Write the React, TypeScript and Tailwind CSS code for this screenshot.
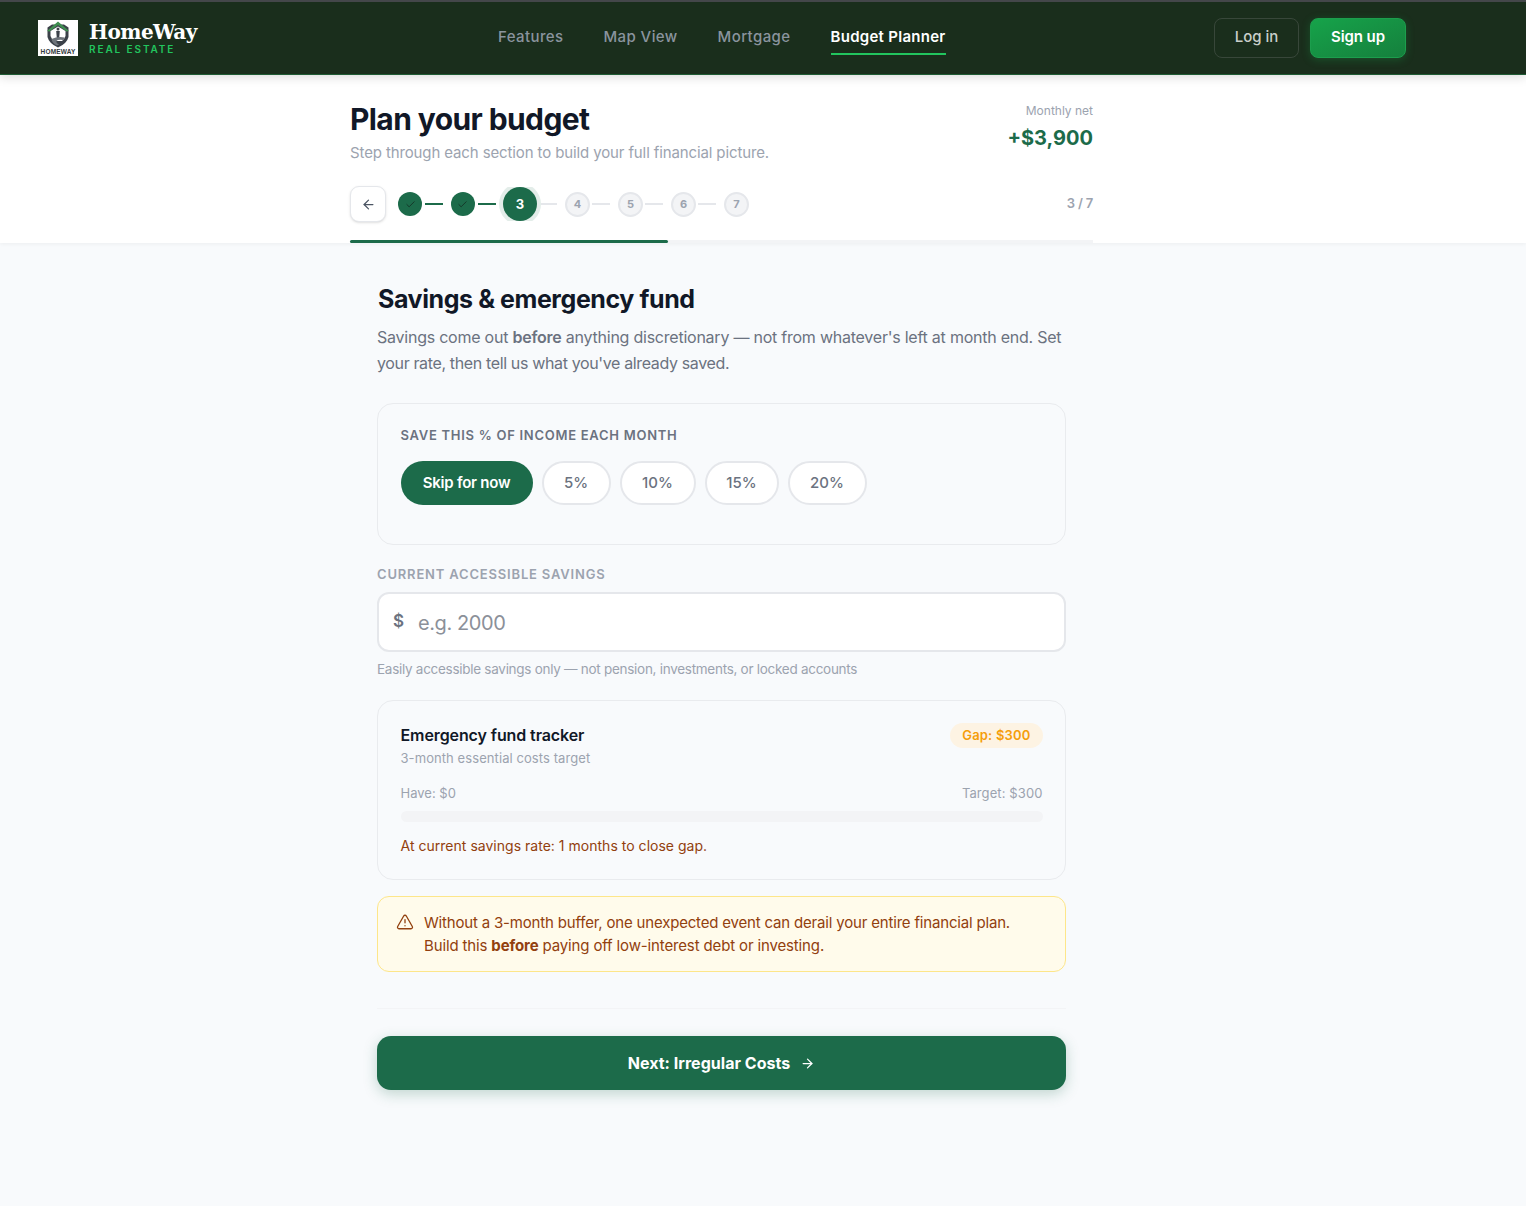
import React from "react";
import { ArrowLeft, ArrowRight, Check, TriangleAlert } from "lucide-react";

function Logo() {
  return (
    <div className="flex h-9 w-10 flex-col items-center bg-white">
      <svg viewBox="0 0 40 28" className="h-7 w-10">
        <path d="M9.5 7.5 L14 4.5 L26 4.5 L30.5 7.5 L30.5 17 Q29 23.5 20 27.5 Q11 23.5 9.5 17 Z" fill="#3b4149" />
        <path d="M12.5 11 L20 6.5 L27.5 11 L27.5 16 Q26 20 24 21 L16 21 Q14 20 12.5 16 Z" fill="#ffffff" />
        <path d="M9 11 L20 1.5 L31 11 L28.5 11.5 L20 5 L11.5 11.5 Z" fill="#3f8f50" />
        <circle cx="20" cy="9" r="1.5" fill="#3b4149" />
        <path d="M18.2 11 h3.6 l-.6 7 h-2.4 Z" fill="#3b4149" />
        <path d="M13.5 19 Q20 16 26.5 17.5 L25.5 20 Q20 19 18.5 21 Q18 23 21 24.5 L19 25.5 Q14 23 13.5 19 Z" fill="#6d737a" />
      </svg>
      <span className="font-['Liberation_Sans'] text-[6.5px] leading-[8px] font-bold tracking-[0.15px] text-[#333a40]">HOMEWAY</span>
    </div>
  );
}

function DoneStep() {
  return (
    <div className="flex items-center">
      <div className="flex h-6 w-6 items-center justify-center rounded-full bg-[#1c6b4a] text-[#143326]">
        <Check size={11} strokeWidth={2} />
      </div>
      <div className="ml-[3px] mr-[7.5px] h-[2px] w-[18px] bg-[#1c6b4a]" />
    </div>
  );
}

function TodoStep({ n, last }: { n: number; last?: boolean }) {
  return (
    <div className="flex items-center">
      <div className="flex h-[25px] w-[25px] items-center justify-center rounded-full border-2 border-[#e5e7eb] bg-[#f3f4f6] text-[11px] font-bold text-[#9ca3af]">
        {n}
      </div>
      {!last && <div className="ml-[2px] mr-2 h-[2px] w-[18px] bg-[#e5e7eb]" />}
    </div>
  );
}

function Pill({ children, width }: { children: React.ReactNode; width: string }) {
  return (
    <button className={`flex h-11 items-center justify-center rounded-full border-2 border-[#e5e7eb] bg-white pt-px text-[15px] font-medium text-[#6b7280] ${width}`}>
      {children}
    </button>
  );
}

export default function App() {
  return (
    <div className="min-h-[1206px] bg-[#f8fafc] font-['Inter',sans-serif]">
      <header className="relative z-10 flex h-[75px] items-center border-t-2 border-b border-t-[#44474a] border-b-[#1f5c34] bg-[#1a2e1c] pl-[38px] pr-[120px] shadow-[0_2px_10px_rgba(0,0,0,0.15)]">
        <div className="flex w-[160px] items-center gap-[11px]">
          <Logo />
          <div>
            <div className="font-['DejaVu_Serif',serif] text-[20px] leading-[22px] font-bold tracking-[-0.5px] text-white">HomeWay</div>
            <div className="text-[10px] leading-[12px] font-semibold tracking-[1.9px] text-[#22c55e]">REAL ESTATE</div>
          </div>
        </div>
        <nav className="mt-[5px] ml-[300px] flex items-center gap-10 text-[15px] leading-5 font-medium tracking-[0.4px] text-[#8a949e]">
          <a className="border-b-2 border-transparent pt-px pb-[6px]">Features</a>
          <a className="border-b-2 border-transparent pt-px pb-[6px]">Map View</a>
          <a className="border-b-2 border-transparent pt-px pb-[6px]">Mortgage</a>
          <a className="border-b-2 border-[#22c55e] pt-px pb-[6px] font-semibold tracking-[0.28px] text-white">Budget Planner</a>
        </nav>
        <div className="ml-auto flex items-center gap-[11px]">
          <button className="h-10 w-[85px] rounded-lg border border-[#38473a] pb-px text-[15px] font-medium text-[#c9cfca]">Log in</button>
          <button className="h-10 w-[96px] rounded-lg border border-[#1c9e4d] bg-gradient-to-br from-[#16a34a] to-[#15803d] pb-px text-[15px] font-semibold tracking-[-0.1px] text-white shadow-[0_2px_8px_rgba(22,163,74,0.3)]">Sign up</button>
        </div>
      </header>

      <section className="h-[168px] bg-white shadow-[0_1px_4px_rgba(0,0,0,0.05)]">
        <div className="ml-[350px] flex h-full w-[743px] flex-col">
          <div className="flex justify-between pt-[25px]">
            <div>
              <h1 className="text-[30px] leading-[38px] font-bold tracking-[-0.6px] text-[#111827]">Plan your budget</h1>
              <p className="mt-[4px] text-[15px] leading-[22px] tracking-[-0.12px] text-[#9ca3af]">Step through each section to build your full financial picture.</p>
            </div>
            <div className="pt-[2px] text-right">
              <div className="text-[12px] leading-[18px] text-[#9ca3af]">Monthly net</div>
              <div className="mt-[3px] text-[20px] leading-[30px] font-bold text-[#1c6b4a]">+$3,900</div>
            </div>
          </div>
          <div className="mt-[22px] flex items-center">
            <button className="mr-3 flex h-9 w-9 items-center justify-center rounded-[9px] border border-[#e5e7eb] bg-white text-[#4b5563] shadow-sm">
              <ArrowLeft size={15} />
            </button>
            <DoneStep />
            <DoneStep />
            <div className="flex items-center">
              <div className="h-[34px] overflow-y-clip">
                <div className="flex h-[34px] w-[34px] items-center justify-center rounded-full bg-[#1c6b4a] pt-px text-[13px] font-bold text-white shadow-[0_0_0_4px_rgba(28,107,74,0.12)]">3</div>
              </div>
              <div className="ml-1 mr-2 h-[2px] w-4 bg-[#e5e7eb]" />
            </div>
            <TodoStep n={4} />
            <TodoStep n={5} />
            <TodoStep n={6} />
            <TodoStep n={7} last />
            <span className="ml-auto text-[13px] font-semibold tracking-[-0.2px] text-[#9ca3af]">3 / 7</span>
          </div>
          <div className="mt-auto h-[3px] bg-[#f3f4f6]">
            <div className="h-full w-[318px] rounded-full bg-[#1c6b4a]" />
          </div>
        </div>
      </section>

      <main className="ml-[377px] w-[689px] pt-[40px]">
        <h2 className="pl-px text-[25px] leading-[32px] font-bold tracking-[-0.42px] text-[#111827]">Savings &amp; emergency fund</h2>
        <p className="mt-[9px] text-[16px] leading-[26px] text-[#6b7280]">
          <span className="tracking-[-0.235px]">Savings come out <b className="font-semibold">before</b> anything discretionary — not from whatever's left at month end. Set</span>
          <br />
          <span className="tracking-[-0.36px]">your rate, then tell us what you've already saved.</span>
        </p>

        <div className="mt-[27px] h-[142px] rounded-2xl border-[1.5px] border-[#e9ebee] px-[22.5px] pt-[20.5px]">
          <div className="text-[13px] leading-[20px] font-semibold tracking-[0.72px] text-[#6b7280]">SAVE THIS % OF INCOME EACH MONTH</div>
          <div className="mt-[16px] flex gap-[9px]">
            <button className="flex h-11 w-[132px] items-center justify-center rounded-full bg-[#1c6b4a] pt-[2px] text-[15px] font-semibold tracking-[-0.22px] text-white">Skip for now</button>
            <Pill width="w-[69px]">5%</Pill>
            <Pill width="w-[76px]">10%</Pill>
            <Pill width="w-[74px]">15%</Pill>
            <Pill width="w-[79px]">20%</Pill>
          </div>
        </div>

        <label className="mt-[19px] block text-[13px] leading-[20px] font-semibold tracking-[0.82px] text-[#9ca3af]">CURRENT ACCESSIBLE SAVINGS</label>
        <div className="mt-2 flex h-[60px] items-center rounded-xl border-2 border-[#e5e7eb] bg-white pl-[14px]">
          <span className="w-[25px] text-[17px] font-semibold text-[#6b7280]">$</span>
          <span className="pt-[2px] text-[20px] tracking-[-0.4px] text-[#8b9099]">e.g. 2000</span>
        </div>
        <p className="mt-[7px] text-[13.5px] leading-[20px] tracking-[-0.28px] text-[#9ca3af]">Easily accessible savings only — not pension, investments, or locked accounts</p>

        <div className="mt-[21px] h-[180px] rounded-2xl border-[1.5px] border-[#e9ebee] px-[22.5px] pt-[21.5px]">
          <div className="flex items-start justify-between">
            <div>
              <div className="text-[16px] leading-[24px] font-semibold tracking-[-0.1px] text-[#111827]">Emergency fund tracker</div>
              <div className="text-[13px] leading-[22px] tracking-[0.08px] text-[#9ca3af]">3-month essential costs target</div>
            </div>
            <div className="flex h-[25px] items-center rounded-full bg-[#fdf3e3] px-3 pt-[2px] text-[13px] font-semibold tracking-[0.18px] text-[#f59e0b]">Gap: $300</div>
          </div>
          <div className="mt-[14px] flex justify-between text-[13px] leading-[20px] text-[#9ca3af]">
            <span>Have: $0</span>
            <span className="tracking-[0.1px]">Target: $300</span>
          </div>
          <div className="mt-[8px] h-[11px] rounded-full bg-[#f3f4f6]" />
          <p className="mt-[13px] text-[14px] leading-[22px] tracking-[0.02px] text-[#92400e]">At current savings rate: 1 months to close gap.</p>
        </div>

        <div className="mt-[16px] flex h-[76px] rounded-xl border border-[#fde68a] bg-[#fffbeb] pl-[18px] pt-[14px]">
          <TriangleAlert size={18} strokeWidth={1.75} className="mt-[2px] text-[#92400e]" />
          <p className="ml-[10px] text-[15px] leading-[23px] tracking-[-0.18px] text-[#92400e]">
            Without a 3-month buffer, one unexpected event can derail your entire financial plan.<br />
            <span className="tracking-[-0.14px]">Build this <b className="font-bold">before</b> paying off low-interest debt or investing.</span>
          </p>
        </div>

        <div className="mt-9 h-px bg-[#f3f4f6]" />

        <button className="mt-[27px] flex h-[54px] w-full items-center justify-center gap-2 rounded-[14px] bg-[#1c6b4a] text-[16px] font-bold tracking-[0.03px] text-white shadow-[0_4px_14px_rgba(28,107,74,0.25)]">
          Next: Irregular Costs <ArrowRight size={15} className="ml-[2px]" />
        </button>
      </main>
    </div>
  );
}
